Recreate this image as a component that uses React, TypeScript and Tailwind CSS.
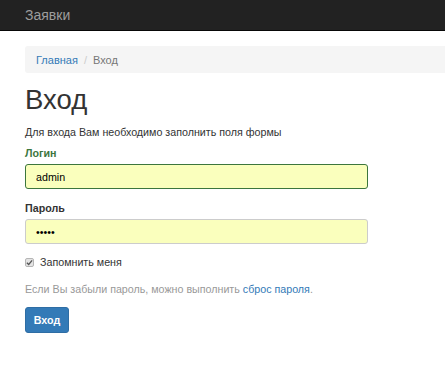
import React from "react";

function Navbar() {
  return (
    <nav className="h-[31px] bg-[#222] border-b border-[#080808]">
      <div className="pl-[25px] pt-[3px]">
        <span className="text-[14px] leading-[16px] text-[#9d9d9d]">Заявки</span>
      </div>
    </nav>
  );
}

function Breadcrumb() {
  return (
    <ol className="mt-[15px] flex h-[27px] items-center rounded-l-[3px] bg-[#f5f5f5] pl-[11px] text-[11px] leading-[16px]">
      <li>
        <a href="#" className="text-[#337ab7]">
          Главная
        </a>
      </li>
      <li className="mx-[6px] text-[#ccc]">/</li>
      <li className="text-[#777]">Вход</li>
    </ol>
  );
}

function Field({
  label,
  value,
  success,
  type,
}: {
  label: string;
  value: string;
  success?: boolean;
  type?: string;
}) {
  return (
    <div>
      <label
        className={
          "block text-[10.7px] font-bold leading-[16px] " +
          (success ? "text-[#3c763d]" : "text-[#333]")
        }
      >
        {label}
      </label>
      <input
        type={type ?? "text"}
        defaultValue={value}
        readOnly
        className={
          "mt-[3px] block h-[25px] w-[343px] rounded-[3px] border bg-[#faffbd] px-[10px] text-[10.7px] text-black outline-none " +
          (success ? "border-[#3c763d]" : "border-[#ccc]")
        }
      />
    </div>
  );
}

export default function App() {
  return (
    <div
      className="min-h-screen overflow-hidden bg-white text-[#333]"
      style={{ fontFamily: '"Liberation Sans", Arial, sans-serif' }}
    >
      <Navbar />
      <div className="pl-[25px]">
        <Breadcrumb />
        <h1 className="mt-[11px] text-[27.5px] font-normal leading-[31px] text-[#333]">Вход</h1>
        <p className="mt-[9px] text-[10.7px] leading-[16px]">
          Для входа Вам необходимо заполнить поля формы
        </p>
        <form className="mt-[5px]">
          <Field label="Логин" value="admin" success />
          <div className="mt-[11px]">
            <Field label="Пароль" value="admin" type="password" />
          </div>
          <div className="mt-[10px] flex h-[16px] items-center text-[10.7px] leading-[16px]">
            <span className="flex h-[9px] w-[9px] items-center justify-center rounded-[2px] border border-[#b5b5b5] bg-[#e4e4e4]">
              <svg width="7" height="7" viewBox="0 0 8 8">
                <path d="M1 4.2 L3.1 6.2 L7 1.6" fill="none" stroke="#555" strokeWidth="1.5" />
              </svg>
            </span>
            <span className="ml-[6px]">Запомнить меня</span>
          </div>
          <p className="mt-[11px] text-[10.7px] leading-[16px] text-[#999]">
            Если Вы забыли пароль, можно выполнить{" "}
            <a href="#" className="text-[#337ab7]">
              сброс пароля
            </a>
            .
          </p>
          <button
            type="button"
            className="mt-[10px] flex h-[26px] w-[44px] items-center justify-center rounded-[3px] border border-[#2e6da4] bg-[#337ab7] text-[10.7px] font-bold text-white"
          >
            Вход
          </button>
        </form>
      </div>
    </div>
  );
}
